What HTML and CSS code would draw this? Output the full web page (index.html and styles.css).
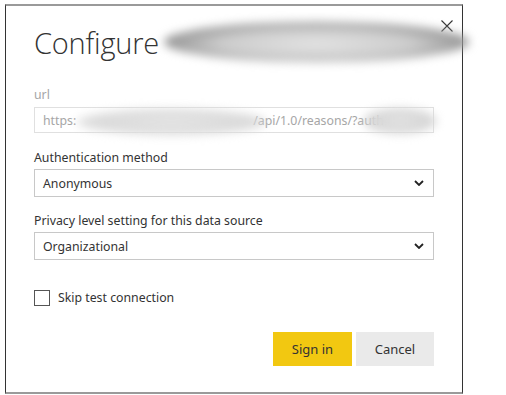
FILE: index.html
```html
<!DOCTYPE html>
<html lang="en">
<head>
  <meta charset="UTF-8">
  <title>Configure</title>
  <link rel="stylesheet" href="styles.css">
</head>
<body>
  <div class="dialog">
    <button class="close" aria-label="Close">
      <svg width="12" height="12" viewBox="0 0 12 12"><path d="M0.5 0.5L11.5 11.5M11.5 0.5L0.5 11.5" stroke="#333" stroke-width="1.1" fill="none"/></svg>
    </button>
    <div class="title-row">
      <h1>Configure</h1>
      <div class="smudge smudge-title"></div>
    </div>

    <label class="label label-muted">url</label>
    <div class="input input-disabled">
      <span>https:</span>
      <span class="gap"></span>
      <span>/api/1.0/reasons/?auth</span>
      <div class="smudge smudge-url1"></div>
      <div class="smudge smudge-url2"></div>
    </div>

    <label class="label">Authentication method</label>
    <div class="select">
      <span>Anonymous</span>
      <svg class="chevron" width="10" height="6" viewBox="0 0 10 6"><path d="M1 1L5 5L9 1" stroke="#222" stroke-width="1.8" fill="none"/></svg>
    </div>

    <label class="label">Privacy level setting for this data source</label>
    <div class="select">
      <span>Organizational</span>
      <svg class="chevron" width="10" height="6" viewBox="0 0 10 6"><path d="M1 1L5 5L9 1" stroke="#222" stroke-width="1.8" fill="none"/></svg>
    </div>

    <div class="check">
      <span class="box"></span>
      <span>Skip test connection</span>
    </div>

    <div class="actions">
      <button class="btn btn-primary">Sign in</button>
      <button class="btn">Cancel</button>
    </div>
  </div>
</body>
</html>
```

FILE: styles.css
```css
body {
  margin: 0;
  background: #fff;
  font-family: "Noto Sans", "Open Sans", sans-serif;
  color: #333;
}
.dialog {
  position: relative;
  box-sizing: border-box;
  width: 458px;
  height: 390px;
  margin: 4px 0 0 5px;
  border-top: 2px solid #9a9a9a;
  border-bottom: 2px solid #9a9a9a;
  border-left: 1px solid #333;
  border-right: 1px solid #333;
  padding: 0 28px 0 28px;
  background: #fff;
}
.close {
  position: absolute;
  top: 14px;
  right: 9px;
  background: none;
  border: none;
  padding: 0;
  width: 12px;
  height: 12px;
}
.close svg {
  display: block;
}
.title-row {
  position: relative;
  height: 66px;
}
h1 {
  margin: 0;
  padding-top: 17px;
  font-family: "Open Sans", sans-serif;
  font-weight: 300;
  font-size: 29px;
  line-height: 40px;
  color: #333;
  letter-spacing: -0.2px;
}
.smudge {
  position: absolute;
  border-radius: 50%;
  filter: blur(5px);
}
.smudge-title {
  left: 130px;
  top: 16px;
  width: 305px;
  height: 40px;
  background: radial-gradient(ellipse at 50% 55%, #e4e4e4 0%, #cccccc 45%, #8c8c8c 75%, rgba(150,150,150,0.2) 100%);
}
.label {
  display: block;
  font-size: 12.3px;
  line-height: 18px;
  color: #333;
  margin-bottom: 2px;
}
.label-muted {
  color: #a6a6a6;
  margin-top: 14px;
  margin-bottom: 3px;
}
.input,
.select {
  position: relative;
  box-sizing: border-box;
  width: 400px;
  display: flex;
  align-items: center;
  padding: 0 8px;
  font-size: 12.3px;
  border: 1px solid #c8c8c8;
  background: #fff;
}
.input {
  height: 26px;
  border-color: #e0e0e0;
  color: #a6a6a6;
  margin-bottom: 16px;
}
.input .gap {
  width: 177px;
}
.smudge-url1 {
  left: 42px;
  top: 1px;
  width: 190px;
  height: 26px;
  background: radial-gradient(ellipse, #e6e6e6 0%, #dadada 55%, rgba(200,200,200,0.3) 100%);
}
.smudge-url2 {
  left: 328px;
  top: 0;
  width: 74px;
  height: 26px;
  background: radial-gradient(ellipse, #e4e4e4 0%, #d6d6d6 55%, rgba(200,200,200,0.3) 100%);
}
.select {
  height: 28px;
  color: #333;
  justify-content: space-between;
  margin-bottom: 15px;
}
.chevron {
  margin-right: 1px;
}
.check {
  display: flex;
  align-items: center;
  gap: 8px;
  font-size: 12.3px;
  margin-top: 29px;
}
.box {
  box-sizing: border-box;
  width: 16px;
  height: 16px;
  border: 1px solid #555;
  background: #fff;
}
.actions {
  display: flex;
  justify-content: flex-end;
  gap: 4px;
  width: 400px;
  margin-top: 26px;
}
.btn {
  width: 78px;
  height: 34px;
  border: none;
  background: #eaeaea;
  color: #333;
  font-family: "Noto Sans", "Open Sans", sans-serif;
  font-size: 13px;
}
.btn-primary {
  width: 79px;
  background: #f2c811;
}
```
